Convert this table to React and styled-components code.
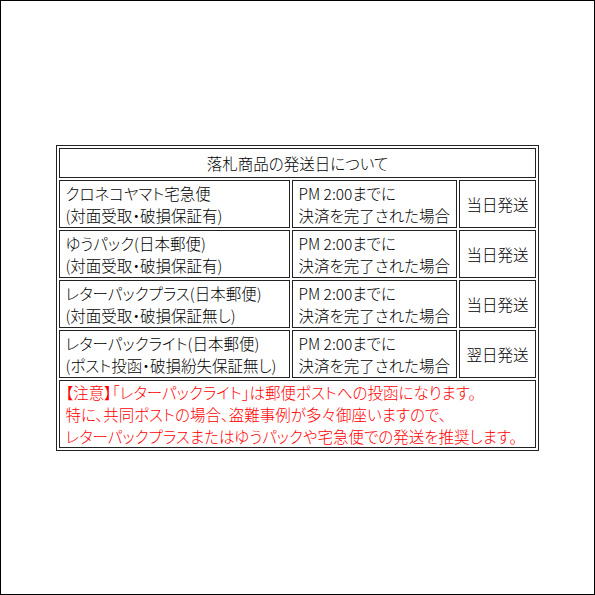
import React from "react";
import styled, { createGlobalStyle } from "styled-components";

const GlobalStyle = createGlobalStyle`
  html, body {
    margin: 0;
    padding: 0;
    background: #ffffff;
  }
  body {
    font-family: "Noto Sans CJK JP", "Noto Sans", sans-serif;
    color: #000000;
  }
`;

const rows = [
  {
    name: ["クロネコヤマト宅急便", "(対面受取・破損保証有)"],
    day: "当日発送",
  },
  {
    name: ["ゆうパック(日本郵便)", "(対面受取・破損保証有)"],
    day: "当日発送",
  },
  {
    name: ["レターパックプラス(日本郵便)", "(対面受取・破損保証無し)"],
    day: "当日発送",
  },
  {
    name: ["レターパックライト(日本郵便)", "(ポスト投函・破損紛失保証無し)"],
    day: "翌日発送",
  },
];

export default function App() {
  return (
    <>
      <GlobalStyle />
      <Page>
        <Table>
          <colgroup>
            <Col $width={231} />
            <Col $width={165} />
            <Col $width={76} />
          </colgroup>
          <tbody>
            <tr>
              <TitleCell colSpan={3}>落札商品の発送日について</TitleCell>
            </tr>
            {rows.map((row) => (
              <tr key={row.name[0]}>
                <Cell>
                  {row.name[0]}
                  <br />
                  {row.name[1]}
                </Cell>
                <Cell>
                  PM 2:00までに
                  <br />
                  決済を完了された場合
                </Cell>
                <DayCell>{row.day}</DayCell>
              </tr>
            ))}
            <tr>
              <NoticeCell colSpan={3}>
                【注意】「レターパックライト」は郵便ポストへの投函になります。
                <br />
                特に、共同ポストの場合、盗難事例が多々御座いますので、
                <br />
                レターパックプラスまたはゆうパックや宅急便での発送を推奨します。
              </NoticeCell>
            </tr>
          </tbody>
        </Table>
      </Page>
    </>
  );
}

const Page = styled.div`
  width: 595px;
  height: 595px;
  box-sizing: border-box;
  border: 1px solid #000000;
  display: flex;
  align-items: center;
  justify-content: center;
`;

const Table = styled.table`
  width: 482px;
  table-layout: fixed;
  border: 1px solid #222222;
  border-collapse: separate;
  border-spacing: 2px;
  font-size: 15.5px;
  font-weight: 300;
  line-height: 22px;
  font-feature-settings: "palt";
`;

const Col = styled.col`
  width: ${(p) => p.$width}px;
`;

const Cell = styled.td`
  box-sizing: border-box;
  border: 1px solid #222222;
  padding: 1px 2px 1px 5px;
  white-space: nowrap;
  overflow: visible;
  vertical-align: middle;
  text-align: left;
`;

const TitleCell = styled(Cell)`
  text-align: center;
  padding: 3px 3px;
`;

const DayCell = styled(Cell)`
  text-align: center;
  padding: 1px 2px;
`;

const NoticeCell = styled(Cell)`
  color: #ff0000;
  padding-top: 0;
  padding-bottom: 0;
`;
